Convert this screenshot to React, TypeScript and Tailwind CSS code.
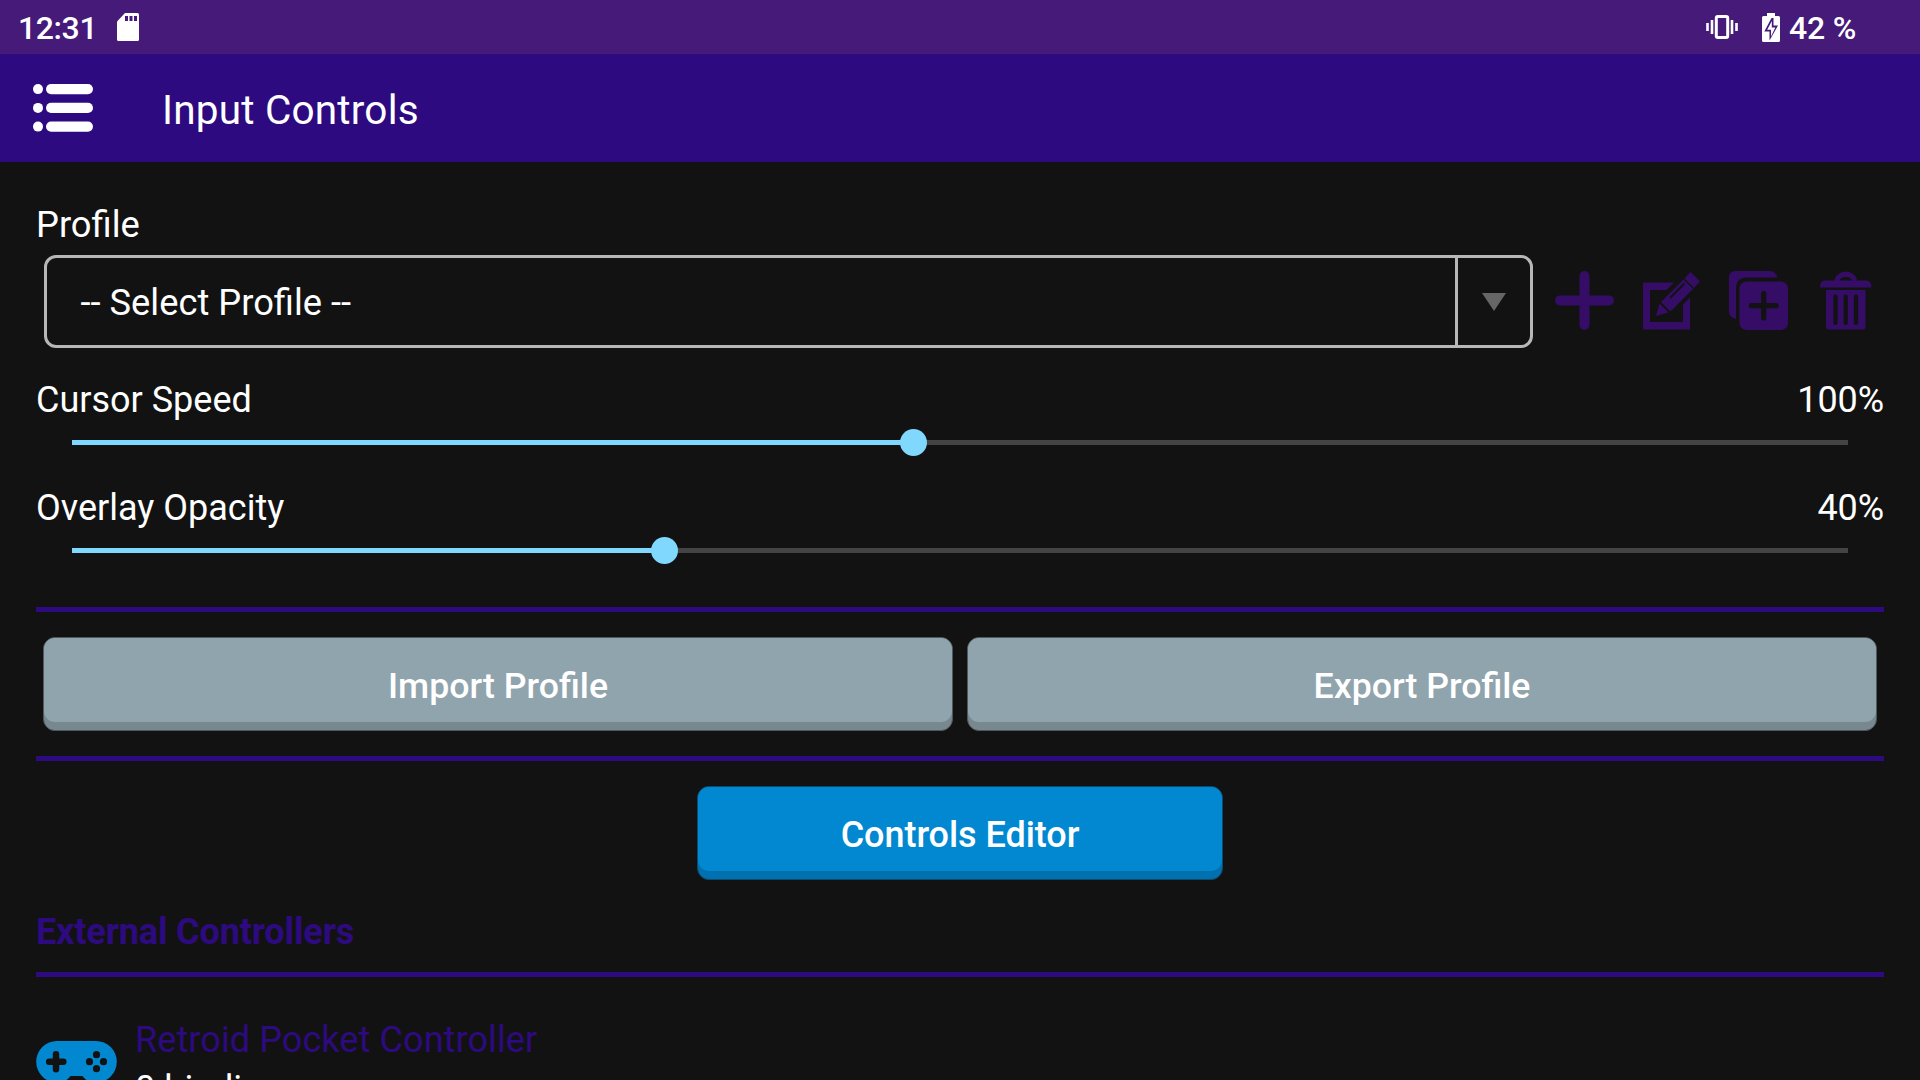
import React from "react";

const ROBOTO = "font-['Roboto',sans-serif]";

function SdCard() {
  return (
    <svg className="ml-5 h-7 w-[22px]" viewBox="0 0 22 28" fill="none">
      <path d="M8 0H20.500Q22 0 22 1.500V26.500Q22 28 20.500 28H1.500Q0 28 0 26.500V8.500Z" fill="white" />
      <path d="M8 3h3v5H8zM12.500 3h3v5h-3zM17 3h3v5h-3z" fill="#451a79" />
    </svg>
  );
}

function Vibrate() {
  return (
    <svg className="h-6 w-8" viewBox="0 0 32 24" fill="none" stroke="white">
      <rect x="10.300" y="1.500" width="11.400" height="21" rx="1.500" strokeWidth="3" />
      <path d="M6 5v14M26 5v14M1.500 8v8M30.500 8v8" strokeWidth="2.600" />
    </svg>
  );
}

function Battery() {
  return (
    <svg className="ml-6 h-[29px] w-[18px]" viewBox="0 0 18 29">
      <path d="M5 0h8v3h3.500Q18 3 18 4.500V27.500Q18 29 16.500 29H1.500Q0 29 0 27.500V4.500Q0 3 1.500 3H5z" fill="white" />
      <path d="M11.500 5V12.500H16L7.500 27.500V18.500H2.300L9.500 5Z" fill="#451a79" />
      <path d="M9.800 8V14.500H13.300L9 23.500V16.800H5.200Z" fill="white" />
    </svg>
  );
}

function MenuIcon() {
  return (
    <svg className="h-12 w-[60px]" viewBox="0 0 60 48" fill="white">
      {[0, 18.8, 37.5].map((y) => (
        <g key={y}>
          <circle cx="5" cy={y + 5.1} r="5" />
          <rect x="13" y={y} width="47" height="10.200" rx="5.100" />
        </g>
      ))}
    </svg>
  );
}

function PlusIcon() {
  return (
    <svg className="h-[60px] w-[60px]" viewBox="0 0 60 60" fill="#350c66">
      <rect x="24.500" y="0" width="10" height="59" rx="5" />
      <rect x="0" y="24.500" width="59" height="10" rx="5" />
    </svg>
  );
}

function EditIcon() {
  return (
    <svg className="ml-7 h-[60px] w-[58px]" viewBox="0 0 58 60" fill="#350c66">
      <path d="M0 12.500Q0 11.500 1 11.500H31L23.500 19H7V51H40V33.500L47 26.500V58.500H1Q0 58.500 0 57.500Z" />
      <path d="M47.500 0.800L57 10.500L51 17L41.500 7.500Z" />
      <path d="M40.500 8.500L50 18L27.500 40.500L18 31Z" />
      <path d="M16.500 32.500L25.500 41.500L13 45Z" />
      <path d="M27.500 26.500L41 13" stroke="#121212" strokeWidth="1.800" strokeLinecap="round" />
    </svg>
  );
}

function DuplicateIcon() {
  return (
    <svg className="ml-[27px] h-[60px] w-[60px]" viewBox="0 0 60 60" fill="#350c66">
      <path d="M7.500 0H41.500Q47.500 0 49.500 6.500H19.500Q8 6.500 8 17.500V48Q1 46.500 1 40.500V6.500Q1 0 7.500 0Z" />
      <rect x="11.500" y="10.500" width="48.500" height="48.500" rx="7" />
      <path d="M35.700 22.500V47M23.500 34.700H48" stroke="#121212" strokeWidth="5.200" strokeLinecap="round" />
    </svg>
  );
}

function TrashIcon() {
  return (
    <svg className="ml-8 h-[60px] w-[52px]" viewBox="0 0 52 60" fill="#350c66">
      <path d="M14.500 10.500A11 9.700 0 0 1 37 10.500H32.500A7 6 0 0 0 19 10.500Z" />
      <path d="M4 9.500H47Q51.500 10 51.500 16.500H0Q0 10 4 9.500Z" />
      <path d="M6 19H45.500V56Q45.500 58.500 43 58.500H8.500Q6 58.500 6 56Z" />
      <path d="M15.500 25.500V52M25.700 25.500V52M36 25.500V52" stroke="#121212" strokeWidth="4.200" strokeLinecap="round" />
    </svg>
  );
}

function Gamepad() {
  return (
    <svg className="mt-[23px] h-14 w-[81px] shrink-0" viewBox="0 0 81 56">
      <path d="M21 0H60A20.800 20.800 0 0 1 60 41.600Q51 41.600 46.500 35H34.500Q30 41.600 21 41.600A20.800 20.800 0 0 1 21 0Z" fill="#0288d1" />
      <path d="M20 13.200V28.200M13.200 20.700H27.300" stroke="#121212" strokeWidth="6.500" strokeLinecap="round" />
      <g fill="#121212">
        <circle cx="60.500" cy="13.700" r="3.600" />
        <circle cx="60.500" cy="27.700" r="3.600" />
        <circle cx="53.500" cy="20.700" r="3.600" />
        <circle cx="67.500" cy="20.700" r="3.600" />
      </g>
    </svg>
  );
}

function Slider({ label, value, position }: { label: string; value: string; position: number }) {
  return (
    <div className="h-[108px]">
      <div className="flex h-[42px] items-center justify-between leading-[42px]">
        <span>{label}</span>
        <span className="tracking-[-0.1px]">{value}</span>
      </div>
      <div className="mx-9 mt-[8px] flex h-[27px] items-center">
        <div className="h-[5px] bg-[#80d8ff]" style={{ width: position }} />
        <div className="z-10 -mx-[13.5px] size-[27px] shrink-0 rounded-full bg-[#80d8ff]" />
        <div className="h-[5px] flex-1 bg-[#444444]" />
      </div>
    </div>
  );
}

function Divider() {
  return <div className="h-[5px] bg-[#2e0a80]" />;
}

function GreyButton({ label }: { label: string }) {
  return (
    <button className="flex h-[94px] flex-1 items-start rounded-xl border border-[#4f595d] bg-[#78888f] text-[35.7px] font-medium">
      <span className="flex h-[84px] flex-1 items-center justify-center rounded-[11px] bg-[#90a4ae] pt-[12px]">{label}</span>
    </button>
  );
}

export default function App() {
  return (
    <div className={`h-[1080px] w-[1920px] overflow-hidden bg-[#121212] text-[36px] leading-[42px] text-white ${ROBOTO}`}>
      <div className="flex h-[54px] items-center bg-[#451a79] pl-[18px] pr-16 text-[32px] font-medium">
        <span className="pt-[2px] tracking-[-0.4px]">12:31</span>
        <SdCard />
        <div className="ml-auto flex items-center">
          <Vibrate />
          <Battery />
          <span className="ml-[9px] pt-[2px] tracking-[-0.25px]">42 %</span>
        </div>
      </div>
      <header className="flex h-[108px] items-center bg-[#2e0a80] pl-[33px]">
        <MenuIcon />
        <h1 className="ml-[69px] pt-[4px] text-[40.5px] tracking-[0.2px]">Input Controls</h1>
      </header>
      <main className="px-9 pt-[42px]">
        <div className="h-[42px] text-[36.3px]">Profile</div>
        <div className="flex h-[111px] items-center pb-px pl-[7.5px]">
          <div className="flex h-[93px] w-[1489px] rounded-xl border-[3px] border-[#b7b7b7]">
            <div className="flex flex-1 items-center pl-[34px] pt-[3px] text-[36.3px]">-- Select Profile --</div>
            <div className="flex w-[75px] items-center justify-center border-l-[3px] border-[#b7b7b7] pt-[2px]">
              <svg className="h-[18px] w-6" viewBox="0 0 24 18"><path d="M0 0H24L12 18Z" fill="#666" /></svg>
            </div>
          </div>
          <div className="ml-[22.5px] flex items-center">
            <PlusIcon />
            <EditIcon />
            <DuplicateIcon />
            <TrashIcon />
          </div>
        </div>
        <div className="mt-[22px]">
          <Slider label="Cursor Speed" value="100%" position={841} />
          <Slider label="Overlay Opacity" value="40%" position={592} />
        </div>
        <div className="mt-[12px]"><Divider /></div>
        <div className="mb-[25px] mt-[25px] flex gap-[14px] px-[7px]">
          <GreyButton label="Import Profile" />
          <GreyButton label="Export Profile" />
        </div>
        <Divider />
        <button className="mx-auto mt-[25px] flex h-[94px] w-[526px] items-start rounded-xl border border-[#0a4b70] bg-[#0270ae] font-medium tracking-[-0.05px]">
          <span className="flex h-[84px] flex-1 items-center justify-center rounded-[11px] bg-[#0288d1] pt-[12px]">Controls Editor</span>
        </button>
        <h2 className="mb-[19px] mt-[31px] font-bold tracking-[-0.13px] text-[#2e0a80]">External Controllers</h2>
        <Divider />
        <div className="flex pt-[41px]">
          <Gamepad />
          <div className="ml-[18px] pt-px">
            <div className="tracking-[0.1px] text-[#2e0a80]">Retroid Pocket Controller</div>
            <div className="mt-[7px]">0 bindings</div>
          </div>
        </div>
      </main>
    </div>
  );
}
